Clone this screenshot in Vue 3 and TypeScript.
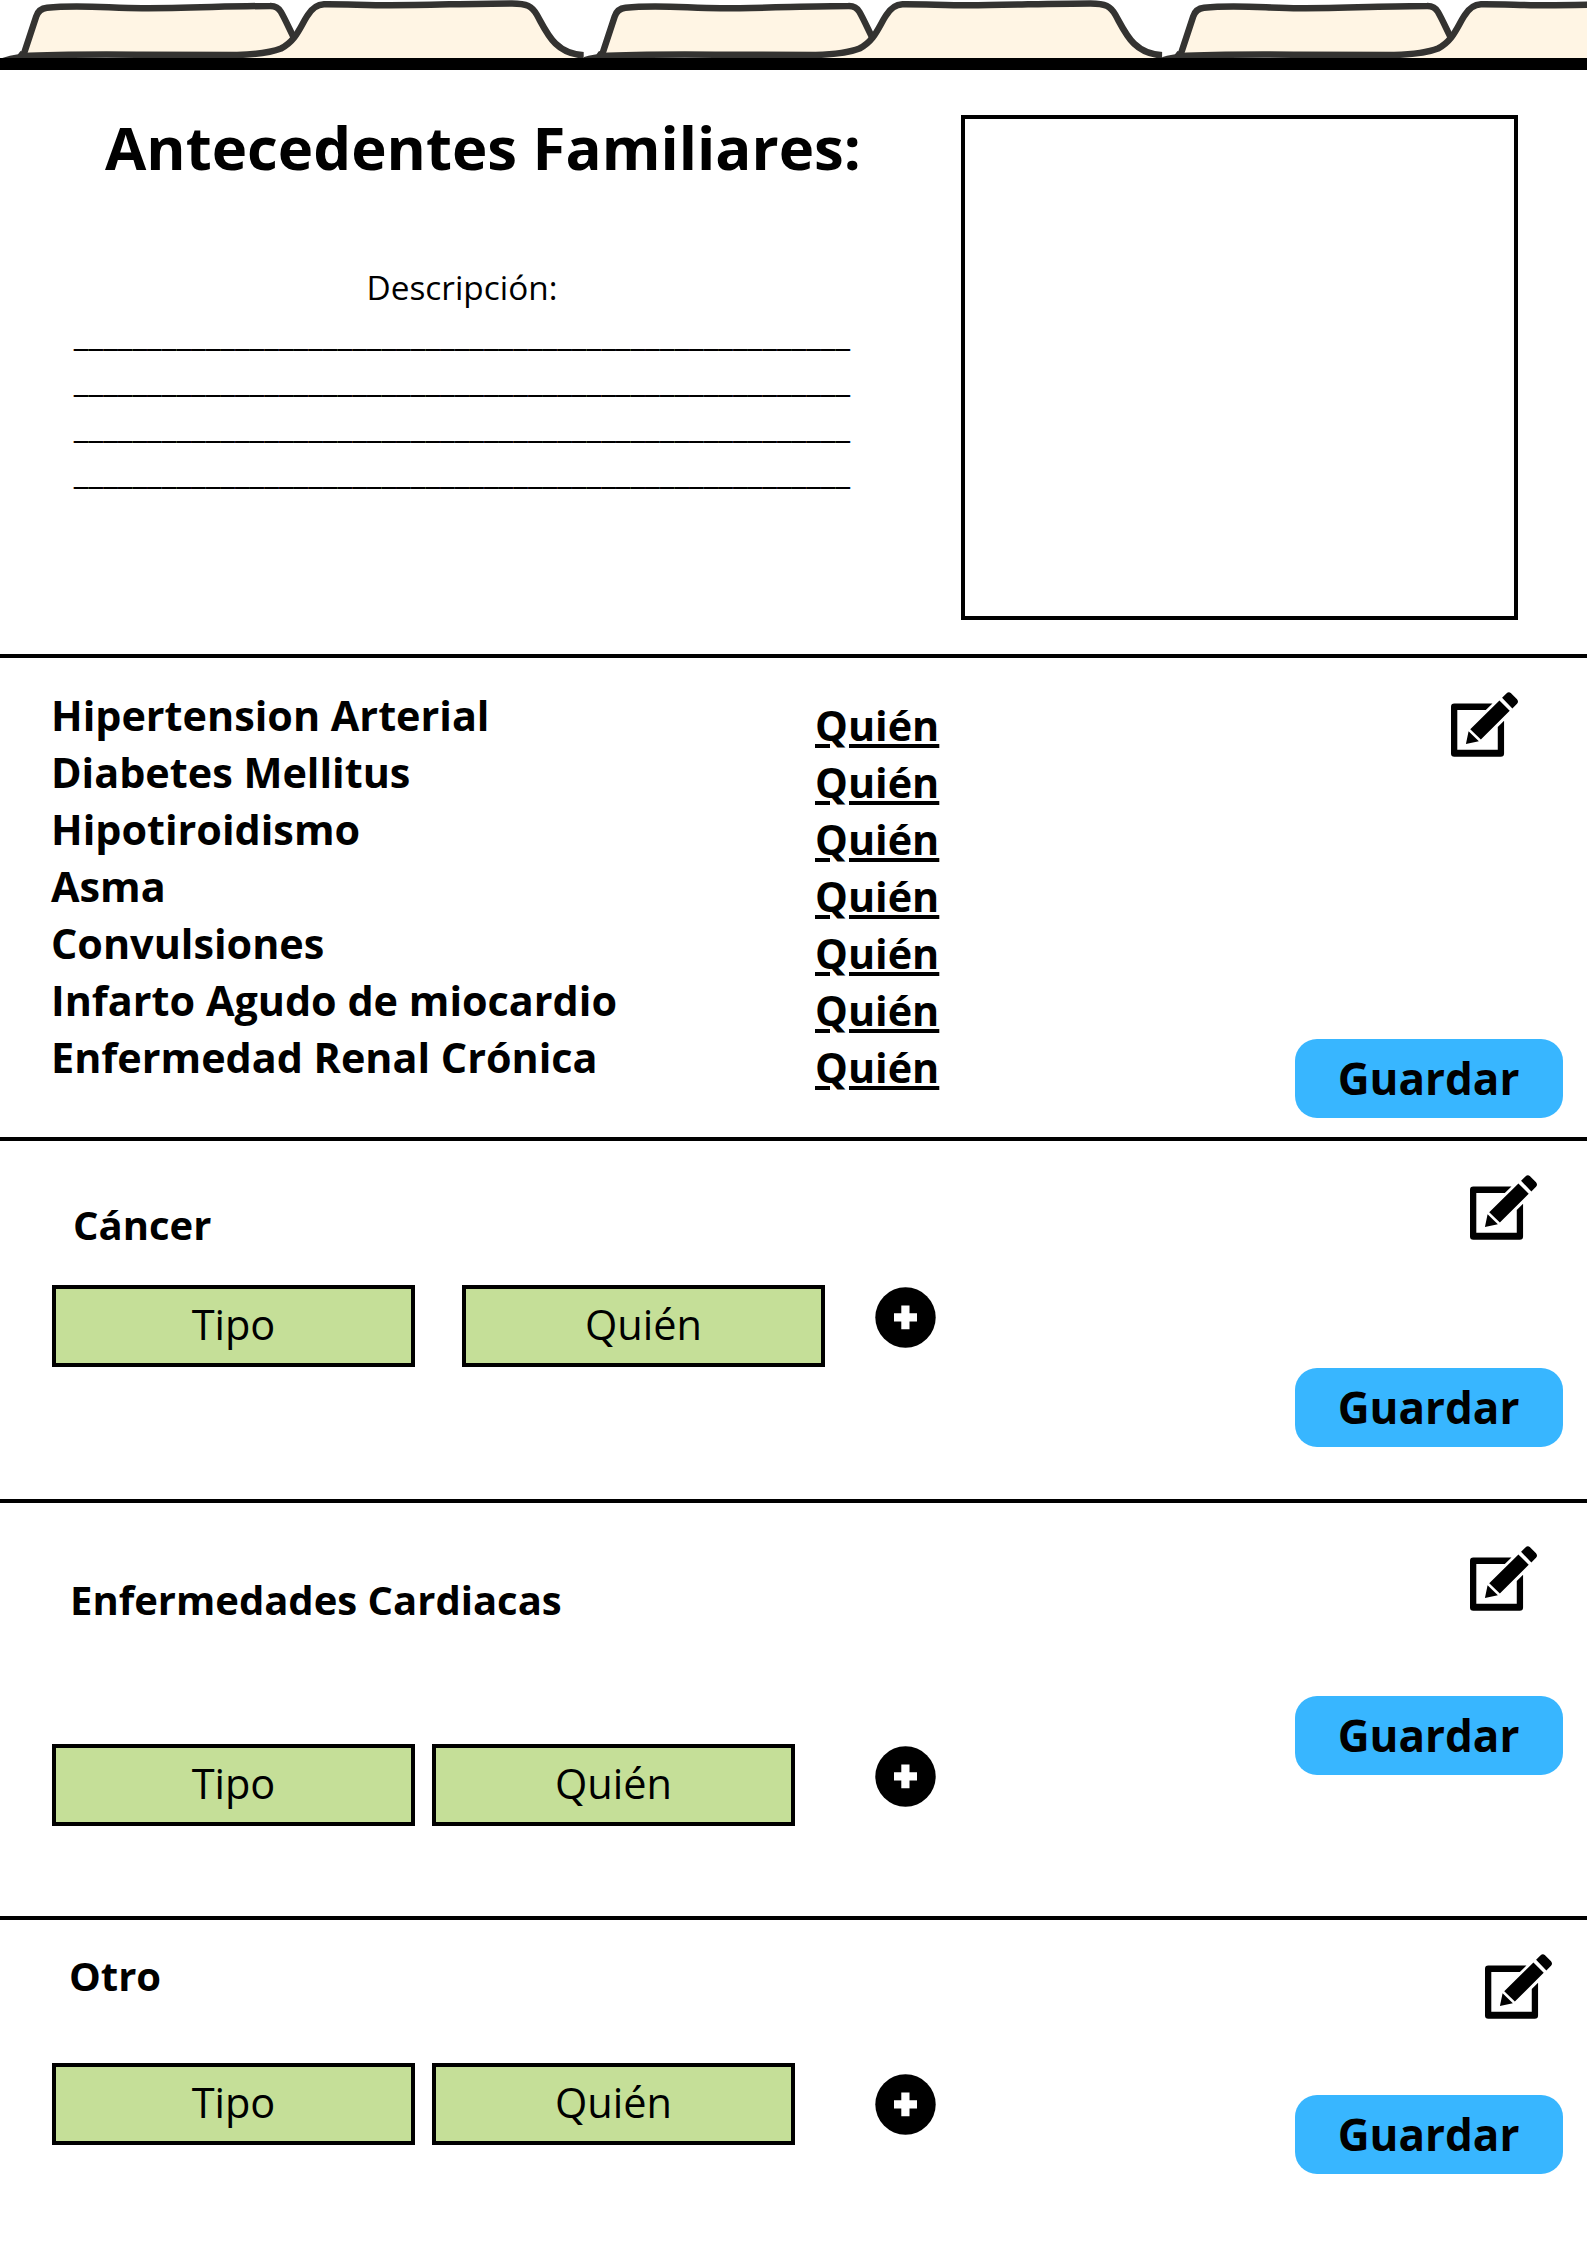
<script setup lang="ts">
interface Field {
  label: string
}

interface RecordSection {
  key: string
  title: string
  fields: Field[]
}

const conditions: string[] = [
  'Hipertension Arterial',
  'Diabetes Mellitus',
  'Hipotiroidismo',
  'Asma',
  'Convulsiones',
  'Infarto Agudo de miocardio',
  'Enfermedad Renal Crónica',
]

const sections: RecordSection[] = [
  { key: 'cancer', title: 'Cáncer', fields: [{ label: 'Tipo' }, { label: 'Quién' }] },
  { key: 'cardiac', title: 'Enfermedades Cardiacas', fields: [{ label: 'Tipo' }, { label: 'Quién' }] },
  { key: 'other', title: 'Otro', fields: [{ label: 'Tipo' }, { label: 'Quién' }] },
]

const blankLines = Array.from({ length: 4 }, () => '_'.repeat(53))
const tabOffsets = [1157, 578.5, 0]
</script>

<template>
  <main class="page">
    <!-- Folder tabs -->
    <svg class="tabs" width="1587" height="58" viewBox="0 0 1587 58" aria-hidden="true">
      <defs>
        <clipPath id="tab-clip"><rect x="0" y="0" width="583.7" height="58" /></clipPath>
      </defs>
      <g v-for="x in tabOffsets" :key="x" :transform="`translate(${x} 0)`">
        <g clip-path="url(#tab-clip)">
          <path class="paper" d="M24 56L36.500 16Q39 8.500 47 7.500C80 4 110 8.200 142 8.200C190 8.200 230 6 270 6Q278 6 281.500 12L293 36V56Z" />
          <path class="paper" d="M230 58C262 56 283 49 289 42C300 31 306 4 323 4H516C528 4 534 6 540 18C553 43 560 54 584 55V58Z" />
          <path class="ink" d="M23.500 55L36.200 16.500Q38.700 8.500 47 7.700C80 4.500 110 8.200 142 8.200C190 8.200 230 6 270 6Q277.500 5.800 281 12C285 19 289 28 293.500 37" />
          <path class="ink-fill" d="M1 58.500Q9 55.300 18 54.300L20.500 51L27 53.300H40V58.500Z" />
          <path class="ink" d="M22 56.300C60 54 100 54.400 142 54.700C180 55 210 55.200 237 55C252 54.500 271 52.500 281 48.500C296 41 300 27 307.500 15.500C312 8 317 4.500 324 4.200C345 4 365 5.200 390 5.200C430 5.200 470 3.400 512 3.400C527 3.400 532 6 537 15C547 33 555 54 584 55.300" />
        </g>
      </g>
    </svg>
    <div class="bar"></div>

    <header class="intro">
      <div class="intro-text">
        <h1>Antecedentes Familiares:</h1>
        <div class="description">
          <div>Descripción:</div>
          <div v-for="(line, i) in blankLines" :key="i" class="rule">{{ line }}</div>
        </div>
      </div>
      <div class="photo"></div>
    </header>

    <section class="block conditions">
      <ul class="names">
        <li v-for="name in conditions" :key="name">{{ name }}</li>
      </ul>
      <ul class="who">
        <li v-for="name in conditions" :key="name"><a>Quién</a></li>
      </ul>
      <div class="actions">
        <svg class="edit" viewBox="63 66 202 195" aria-hidden="true">
          <path d="M73 100H188L168 120H82V240H204V171L223 152V251Q223 261 213 261H73Q63 261 63 251V110Q63 100 73 100ZM209 91L240 122L153 209L121 178ZM217 83L230 70Q237 63 244 69L262 87Q268 94 262 101L248 115ZM116 184L147 214L108 222Z" />
        </svg>
        <button type="button" class="save">Guardar</button>
      </div>
    </section>

    <section v-for="s in sections" :key="s.key" class="block" :class="s.key">
      <div class="content">
        <h2>{{ s.title }}</h2>
        <div class="fields">
          <div v-for="f in s.fields" :key="f.label" class="field">{{ f.label }}</div>
          <svg class="add" viewBox="0 0 61 61" aria-hidden="true">
            <circle cx="30.500" cy="30.500" r="30.200" />
            <path d="M26.300 18.500H34.500V26.300H42V34.500H34.500V42.200H26.300V34.500H19V26.300H26.300Z" />
          </svg>
        </div>
      </div>
      <div class="actions">
        <svg class="edit" viewBox="63 66 202 195" aria-hidden="true">
          <path d="M73 100H188L168 120H82V240H204V171L223 152V251Q223 261 213 261H73Q63 261 63 251V110Q63 100 73 100ZM209 91L240 122L153 209L121 178ZM217 83L230 70Q237 63 244 69L262 87Q268 94 262 101L248 115ZM116 184L147 214L108 222Z" />
        </svg>
        <button type="button" class="save">Guardar</button>
      </div>
    </section>
  </main>
</template>

<style>
body {
  margin: 0;
  background: #fff;
}
</style>

<style scoped>
.page {
  width: 1587px;
  height: 2245px;
  overflow: hidden;
  background: #fff;
  color: #000;
  font-family: "Open Sans", "Noto Sans", sans-serif;
}
.tabs {
  display: block;
}
.paper {
  fill: #fff5e4;
}
.ink {
  fill: none;
  stroke: #343331;
  stroke-width: 6.5;
}
.ink-fill {
  fill: #343331;
}
.bar {
  height: 12px;
  background: #000;
}
.intro {
  display: flex;
  box-sizing: border-box;
  height: 584px;
}
.intro-text {
  width: 961px;
}
h1 {
  margin: 35px 0 0 105px;
  font-size: 59.9px;
  line-height: 84px;
  font-weight: 700;
  white-space: nowrap;
}
.description {
  width: 778px;
  margin: 75px 0 0 73px;
  font-size: 33.33px;
  line-height: 46px;
  text-align: center;
  white-space: nowrap;
}
.rule {
  letter-spacing: 0.05px;
}
.photo {
  box-sizing: border-box;
  width: 557px;
  height: 505px;
  margin-top: 45px;
  border: 4px solid #000;
}
.block {
  display: flex;
  box-sizing: border-box;
  border-top: 4px solid #000;
}
.conditions {
  height: 483px;
}
.cancer {
  height: 362px;
}
.cardiac {
  height: 417px;
}
.other {
  height: 329px;
}
ul {
  margin: 0;
  padding: 0;
  list-style: none;
  font-size: 41.35px;
  line-height: 57px;
  font-weight: 700;
  white-space: nowrap;
}
.names {
  width: 764px;
  padding: 29px 0 0 51px;
}
.who {
  width: 480px;
  padding-top: 39px;
}
.who a {
  text-decoration: underline;
  text-decoration-thickness: 4.2px;
  text-underline-offset: 3.3px;
}
.content {
  width: 1295px;
}
h2 {
  margin: 0;
  font-size: 40px;
  line-height: 56px;
  font-weight: 700;
  white-space: nowrap;
}
.fields {
  display: flex;
  align-items: flex-start;
  gap: 17px;
  padding-left: 52px;
}
.field {
  display: flex;
  align-items: center;
  justify-content: center;
  box-sizing: border-box;
  width: 363px;
  height: 82px;
  padding-bottom: 3px;
  border: 4px solid #000;
  background: #c5df98;
  font-size: 41.5px;
  line-height: 57px;
}
.add {
  width: 61px;
  height: 61px;
  margin: 2px 0 0 63px;
}
.add path {
  fill: #fff;
}
.actions {
  display: flex;
  flex-direction: column;
  align-items: flex-start;
  width: 292px;
}
.edit {
  width: 67px;
  height: 65px;
  margin-left: 175px;
}
.save {
  width: 268px;
  height: 79px;
  padding: 0 1px 1px 0;
  border: 0;
  border-radius: 22px;
  background: #38b6ff;
  color: #000;
  font: 700 44px/60px "Open Sans", "Noto Sans", sans-serif;
}

.conditions .edit {
  margin: 34px 0 282px 156px;
}

.cancer h2 {
  margin: 56px 0 32px 73px;
}
.cancer .fields {
  gap: 47px;
}
.cancer .add {
  margin-left: 3px;
}
.cancer .edit {
  margin-top: 34px;
  margin-bottom: 128px;
}

.cardiac h2 {
  margin: 69px 0 116px 70px;
}
.cardiac .edit {
  margin-top: 43px;
  margin-bottom: 85px;
}

.other h2 {
  margin: 28px 0 59px 69px;
}
.other .add {
  margin-top: 11px;
}
.other .edit {
  margin: 34px 0 76px 190px;
}
</style>
